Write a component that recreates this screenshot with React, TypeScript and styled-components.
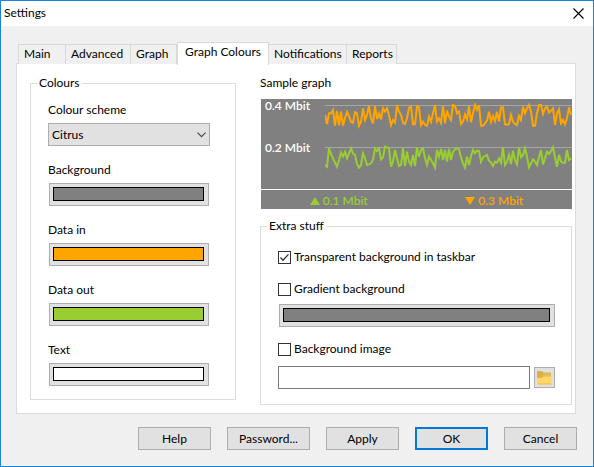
import React, { useState } from 'react'
import styled, { createGlobalStyle } from 'styled-components'

const GlobalStyle = createGlobalStyle`
  *, *::before, *::after {
    box-sizing: border-box;
  }

  body {
    margin: 0;
    background: #f0f0f0;
    color: #000;
    font-family: Lato, 'Open Sans', sans-serif;
    font-size: 12px;
    line-height: 16px;
  }

  button, input, select {
    margin: 0;
    color: inherit;
    font: inherit;
  }
`

const Window = styled.div`
  display: flex;
  flex-direction: column;
  min-height: 100vh;
  border: 1px solid #1883d7;
  background: #f0f0f0;
`

const TitleBar = styled.header`
  display: flex;
  align-items: center;
  justify-content: space-between;
  height: 25px;
  padding: 0 9px 0 3px;
  background: #fff;
`

const Title = styled.h1`
  margin: 0;
  padding-bottom: 2px;
  font-size: 12px;
  font-weight: 400;
`

const CloseButton = styled.button`
  display: flex;
  padding: 0;
  border: 0;
  background: none;
`

const TabList = styled.div`
  display: flex;
  align-items: flex-end;
  height: 23px;
  margin: 15px 17px 0;
`

const Tab = styled.button<{ $width: number; $active?: boolean }>`
  flex: none;
  width: ${p => p.$width}px;
  height: ${p => (p.$active ? 23 : 20)}px;
  margin-bottom: ${p => (p.$active ? -1 : 0)}px;
  padding: ${p => (p.$active ? '0 0 5px 7px' : '0 0 1px 5px')};
  border: 1px solid #d9d9d9;
  border-bottom: 0;
  border-left-width: ${p => (p.$active ? 1 : 0)}px;
  background: ${p => (p.$active ? '#fff' : '#f0f0f0')};
  text-align: left;
  white-space: nowrap;
  z-index: ${p => (p.$active ? 1 : 0)};

  &:first-child {
    border-left-width: 1px;
  }
`

const Panel = styled.main`
  display: grid;
  grid-template-columns: 206px 1fr;
  align-items: start;
  gap: 24px;
  min-height: 351px;
  margin: -1px 17px 0 15px;
  padding: 11px 3px 8px 13px;
  border: 1px solid #dcdcdc;
  background: #fff;
`

const Group = styled.fieldset<{ $padding: string }>`
  min-width: 0;
  margin: 0;
  padding: ${p => p.$padding};
  border: 1px solid #dcdcdc;
`

const Legend = styled.legend`
  margin-left: -11px;
  padding: 0 2px;
`

const Field = styled.div`
  display: flex;
  flex-direction: column;
  gap: 5px;

  & + & {
    margin-top: 16px;
  }
`

const SelectBox = styled.div`
  display: grid;
  align-items: center;

  & > * {
    grid-area: 1 / 1;
  }

  & > svg {
    justify-self: end;
    margin-right: 4px;
    pointer-events: none;
  }
`

const Select = styled.select`
  width: 100%;
  height: 23px;
  padding: 0 20px 0 3px;
  border: 1px solid #adadad;
  border-radius: 0;
  background: #e1e1e1;
  appearance: none;
`

const SwatchButton = styled.button`
  display: flex;
  height: 23px;
  margin: 0 1px;
  padding: 3px 4px 4px 3px;
  border: 1px solid #adadad;
  background: #e1e1e1;
`

const Swatch = styled.span<{ $color: string }>`
  flex: 1;
  height: 14px;
  border: 1px solid #000;
  background: ${p => p.$color};
`

const SampleTitle = styled.h2`
  margin: 0 0 8px;
  font-size: 12px;
  font-weight: 400;
`

const Graph = styled.div`
  display: grid;
  grid-template-columns: 64px 1fr;
  grid-template-rows: 90px 20px;
  margin: 0 0 9px 1px;
  background: #808080;
  font-weight: 600;
`

const Scale = styled.div`
  display: flex;
  flex-direction: column;
  gap: 28px;
  padding-left: 4px;
  color: #fff;
  line-height: 14px;
  white-space: nowrap;
`

const Plot = styled.svg`
  width: 100%;
  height: 90px;
`

const Totals = styled.div`
  display: grid;
  grid-column: 1 / -1;
  grid-template-columns: 1fr 1fr;
  border-top: 1px solid #fff;
`

const Total = styled.span<{ $color: string }>`
  display: flex;
  align-items: center;
  justify-content: center;
  gap: 3px;
  padding-top: 3px;
  color: ${p => p.$color};
`

const CheckRow = styled.label<{ $top?: number }>`
  display: flex;
  align-items: center;
  gap: 3px;
  margin-top: ${p => p.$top || 0}px;
`

const CheckBox = styled.span`
  display: grid;

  & > * {
    grid-area: 1 / 1;
  }

  & > svg {
    pointer-events: none;
  }
`

const CheckInput = styled.input`
  width: 13px;
  height: 13px;
  border: 1px solid #333;
  background: #fff;
  appearance: none;
`

const GradientRow = styled.div`
  display: grid;
  margin-top: 7px;
`

const FileRow = styled.div`
  display: flex;
  align-items: center;
  gap: 4px;
  margin: 9px 1px 0 0;
`

const FileInput = styled.input`
  flex: 1;
  min-width: 0;
  height: 23px;
  padding: 0 4px;
  border: 1px solid #7a7a7a;
  background: #fff;
`

const BrowseButton = styled.button`
  display: flex;
  align-items: center;
  justify-content: center;
  width: 21px;
  height: 21px;
  padding: 0;
  border: 1px solid #adadad;
  background: #e1e1e1;
`

const Footer = styled.footer`
  display: flex;
  justify-content: flex-end;
  gap: 16px;
  padding: 13px 16px 16px;
`

const PushButton = styled.button<{ $width?: number; $default?: boolean }>`
  width: ${p => p.$width || 73}px;
  height: 23px;
  padding: 0;
  border: ${p => (p.$default ? '2px solid #0078d7' : '1px solid #adadad')};
  background: #e1e1e1;
`

const tabs = [
    { name: 'Main', width: 48 },
    { name: 'Advanced', width: 65 },
    { name: 'Graph', width: 46 },
    { name: 'Graph Colours', width: 92 },
    { name: 'Notifications', width: 78 },
    { name: 'Reports', width: 50 },
]

const colours = [
    { name: 'Background', value: '#808080' },
    { name: 'Data in', value: '#ffa500' },
    { name: 'Data out', value: '#9acd32' },
    { name: 'Text', value: '#ffffff' },
]

// one sample every two pixels, in thirds of a pixel from the top of the graph
const dataIn = [
    48, 75, 43, 43, 33, 80, 36, 79, 38, 80, 58, 39, 51, 68, 71, 40, 43, 80, 68, 28, 63, 48, 21, 58, 73, 21,
    60, 43, 61, 28, 38, 28, 48, 78, 63, 71, 18, 38, 48, 71, 75, 58, 26, 23, 76, 76, 23, 25, 78, 68, 78, 80,
    53, 68, 43, 18, 68, 58, 71, 21, 73, 35, 53, 63, 18, 21, 43, 38, 75, 68, 46, 61, 21, 70, 43, 18, 33, 19,
    80, 80, 73, 65, 38, 68, 51, 66, 38, 68, 25, 25, 76, 78, 75, 48, 68, 75, 78, 51, 63, 23, 43, 28, 18, 38,
    80, 80, 43, 18, 18, 45, 28, 23, 41, 35, 28, 78, 43, 31, 73, 63, 76, 58, 25, 48,
]

const dataOut = [
    198, 203, 148, 165, 178, 191, 203, 183, 161, 173, 158, 178, 163, 148, 163, 168, 195, 206, 198, 163, 178,
    198, 196, 193, 183, 148, 156, 148, 181, 175, 143, 145, 148, 203, 188, 153, 178, 201, 198, 148, 201, 158,
    188, 198, 168, 201, 145, 173, 153, 148, 178, 198, 173, 183, 193, 206, 153, 173, 150, 183, 153, 188, 150,
    183, 158, 151, 148, 151, 175, 193, 206, 173, 198, 171, 153, 163, 155, 156, 188, 175, 171, 168, 185, 191,
    201, 188, 191, 178, 191, 145, 198, 188, 168, 195, 155, 183, 196, 145, 175, 168, 148, 173, 205, 193, 181,
    188, 198, 175, 153, 196, 178, 158, 165, 156, 145, 175, 203, 168, 188, 191, 191, 153, 183, 178,
]

const toPoints = (samples: number[]) => samples.map((y, i) => `${i * 2},${y / 3}`).join(' ')

function Check({ label, initial = false, top }: { label: string; initial?: boolean; top?: number }) {
    const [checked, setChecked] = useState(initial)

    return (
        <CheckRow $top={top}>
            <CheckBox>
                <CheckInput type="checkbox" checked={checked} onChange={e => setChecked(e.target.checked)} />
                {checked && (
                    <svg width="13" height="13" viewBox="0 0 13 13" fill="none">
                        <path d="M2.5 6.5 5 9.2 10.5 3.4" stroke="#333" strokeWidth="1.3" />
                    </svg>
                )}
            </CheckBox>
            {label}
        </CheckRow>
    )
}

export default function App() {
    const [activeTab, setActiveTab] = useState('Graph Colours')
    const [scheme, setScheme] = useState('Citrus')

    return (
        <>
            <GlobalStyle />
            <Window>
                <TitleBar>
                    <Title>Settings</Title>
                    <CloseButton aria-label="Close">
                        <svg width="11" height="11" viewBox="0 0 11 11">
                            <path d="M0.5 0.5 10.5 10.5M10.5 0.5 0.5 10.5" stroke="#000" strokeWidth="1.1" />
                        </svg>
                    </CloseButton>
                </TitleBar>

                <TabList role="tablist">
                    {tabs.map(tab => (
                        <Tab
                            key={tab.name}
                            role="tab"
                            aria-selected={tab.name === activeTab}
                            $width={tab.width}
                            $active={tab.name === activeTab}
                            onClick={() => setActiveTab(tab.name)}
                        >
                            {tab.name}
                        </Tab>
                    ))}
                </TabList>

                <Panel role="tabpanel">
                    <Group $padding="11px 25px 13px 17px">
                        <Legend>Colours</Legend>
                        <Field>
                            <label htmlFor="scheme">Colour scheme</label>
                            <SelectBox>
                                <Select id="scheme" value={scheme} onChange={e => setScheme(e.target.value)}>
                                    <option>Citrus</option>
                                </Select>
                                <svg width="9" height="6" viewBox="0 0 9 6" fill="none">
                                    <path d="M0.5 0.7 4.5 4.7 8.5 0.7" stroke="#444" strokeWidth="1.1" />
                                </svg>
                            </SelectBox>
                        </Field>
                        {colours.map(({ name, value }) => (
                            <Field key={name}>
                                <label htmlFor={name}>{name}</label>
                                <SwatchButton id={name}>
                                    <Swatch $color={value} />
                                </SwatchButton>
                            </Field>
                        ))}
                    </Group>

                    <div>
                        <SampleTitle>Sample graph</SampleTitle>
                        <Graph>
                            <Scale>
                                <span>0.4 Mbit</span>
                                <span>0.2 Mbit</span>
                            </Scale>
                            <Plot viewBox="0 0 247 90" preserveAspectRatio="none" fill="none">
                                <path d="M0 6.5H247M0 48.5H247" stroke="#a6a6a6" />
                                <polyline points={toPoints(dataIn)} stroke="#ffa500" strokeWidth="2" />
                                <polyline points={toPoints(dataOut)} stroke="#9acd32" strokeWidth="2" />
                            </Plot>
                            <Totals>
                                <Total $color="#9acd32">
                                    <svg width="10" height="8" viewBox="0 0 10 8">
                                        <path d="M5 0 10 8H0Z" fill="currentColor" />
                                    </svg>
                                    0.1 Mbit
                                </Total>
                                <Total $color="#ffa500">
                                    <svg width="10" height="8" viewBox="0 0 10 8">
                                        <path d="M0 0H10L5 8Z" fill="currentColor" />
                                    </svg>
                                    0.3 Mbit
                                </Total>
                            </Totals>
                        </Graph>

                        <Group $padding="15px 15px 15px 17px">
                            <Legend>Extra stuff</Legend>
                            <Check label="Transparent background in taskbar" initial />
                            <Check label="Gradient background" top={16} />
                            <GradientRow>
                                <SwatchButton aria-label="Gradient colour">
                                    <Swatch $color="#808080" />
                                </SwatchButton>
                            </GradientRow>
                            <Check label="Background image" top={14} />
                            <FileRow>
                                <FileInput type="text" aria-label="Background image file" />
                                <BrowseButton aria-label="Browse">
                                    <svg width="17" height="15" viewBox="0 0 17 15">
                                        <path d="M1 1.5 1.5 1H6L7.5 2.5H15V13H1Z" fill="#dfb04a" />
                                        <path d="M7 3.5H14.5V6.5H7Z" fill="#e6bc5e" />
                                        <path d="M0.5 8H6L7.5 6.5H16L15.5 14.5H1.5Z" fill="#ffd869" />
                                        <path d="M1.5 14H15.5" stroke="#ecbd48" />
                                    </svg>
                                </BrowseButton>
                            </FileRow>
                        </Group>
                    </div>
                </Panel>

                <Footer>
                    <PushButton>Help</PushButton>
                    <PushButton $width={83}>Password...</PushButton>
                    <PushButton>Apply</PushButton>
                    <PushButton $default>OK</PushButton>
                    <PushButton>Cancel</PushButton>
                </Footer>
            </Window>
        </>
    )
}
